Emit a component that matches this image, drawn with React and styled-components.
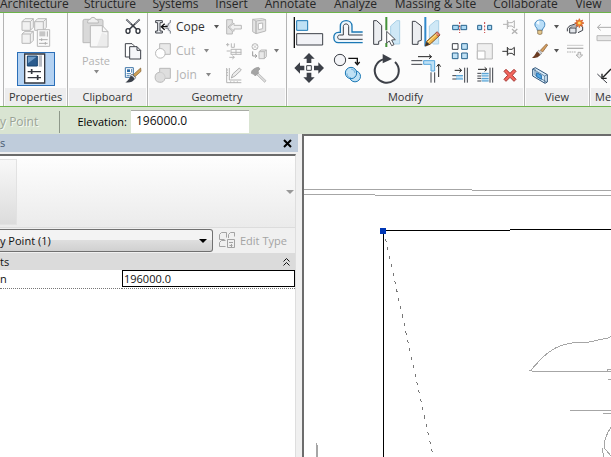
import React, { useState } from "react";
import styled, { createGlobalStyle } from "styled-components";

const GlobalStyle = createGlobalStyle`
  * { box-sizing: border-box; }
  body { margin: 0; background: #fff; }
  button, input, select { font: inherit; color: inherit; margin: 0; padding: 0; border: 0; background: none; border-radius: 0; }
`;

const ink = "#3d4048";
const pale = "#b9b9b9";
const blue = "#1b78b5";
const sky = "#bfe1f5";

const Page = styled.div`
  display: flex;
  flex-direction: column;
  min-height: 100vh;
  overflow: hidden;
  font: 12px/16px "Open Sans", "Noto Sans", sans-serif;
  color: #111;
`;

/* ---------- Ribbon ---------- */
const TabBar = styled.nav`
  display: grid;
  grid-template-columns: 76px 68px 63px 49px 69px 61px 99px 81px 1fr;
  align-content: end;
  height: 13px;
  overflow: hidden;
  background: #999;
  border-bottom: 1px solid #6cb44a;
`;

const Tab = styled.button`
  display: flex;
  align-items: flex-start;
  justify-content: ${(p) => (p.$start ? "flex-start" : "center")};
  height: 16px;
  font-size: 12px;
  color: #262626;
  white-space: nowrap;
`;

const Ribbon = styled.div`
  display: grid;
  grid-template-columns: 64px 80px 139px 238px 65px 1fr;
  padding-left: 3px;
  height: 94px;
  background: #fcfcfc;
  border-bottom: 1px solid #6cb44a;
`;

const Panel = styled.section`
  display: flex;
  flex-direction: column;
  min-width: 0;
  overflow: hidden;
  border-left: 1px solid #b4b4b4;
`;

const PanelBody = styled.div`
  display: flex;
  flex: 1;
  padding: ${(p) => p.$pad || "2px 0 0"};
  flex-direction: ${(p) => (p.$column ? "column" : "row")};
  align-items: ${(p) => (p.$column ? "center" : "flex-start")};
  gap: ${(p) => p.$gap || "0"};
`;

const PanelTitle = styled.h2`
  margin: 0 1px;
  height: 18px;
  font-size: 11px;
  line-height: 18px;
  font-weight: 400;
  text-align: ${(p) => (p.$start ? "left" : "center")};
  padding-left: ${(p) => (p.$start ? "4px" : "0")};
  background: #ededee;
  color: #333;
`;

const IconGrid = styled.div`
  display: grid;
  grid-template-columns: repeat(${(p) => p.$cols}, ${(p) => p.$w}px);
  grid-auto-rows: ${(p) => p.$h}px;
  margin-left: ${(p) => p.$left || 0}px;
`;

const Tool = styled.button`
  display: flex;
  align-items: center;
  font-size: 12px;
  white-space: nowrap;
  color: ${(p) => (p.disabled ? "#b3b3b3" : "#333")};
`;

const ActiveTool = styled.button`
  display: flex;
  width: 38px;
  height: 34px;
  border: 1px solid #2b6fb8;
  background: #b4d2f2;
`;

const PasteTool = styled.button`
  display: flex;
  flex-direction: column;
  align-items: center;
  width: 34px;
  font-size: 11px;
  line-height: 18px;
  color: #b3b3b3;
`;

const ToolList = styled.div`
  display: grid;
  grid-auto-rows: 24px;
  width: 67px;
`;

const ToolText = styled.span`
  margin: 0 8px 0 4px;
`;

const Svg = styled.svg`
  display: block;
  flex: none;
`;

/* Artwork is drawn on a grid of three units per pixel. */
function Art({ box, children }) {
  const [, , w, h] = box;
  return (
    <Svg viewBox={box.join(" ")} width={w / 3} height={h / 3} fill="none" strokeWidth="3" aria-hidden="true">
      {children}
    </Svg>
  );
}

const Arrow = ({ color = "#555" }) => (
  <Svg width="7" height="4" viewBox="0 0 7 4" aria-hidden="true">
    <path d="M1 0h5L3.500 3.500z" fill={color} />
  </Svg>
);

const WideArrow = ({ color }) => (
  <Svg width="8" height="4" viewBox="0 0 8 4" aria-hidden="true">
    <path d="M0 0h8L4 4z" fill={color} />
  </Svg>
);

const TypePropertiesArt = () => (
  <Art box={[60, 48, 96, 96]}>
    <g fill="#f1f1f1" stroke="#b9b9b9" strokeLinejoin="round">
      <path d="M66 65l9-9h25v26l-9 9H66zM66 65h25v26M91 65l9-9" />
      <path d="M104 65l9-9h26v26l-9 9h-26zM104 65h26v26M130 65l9-9" />
      <path d="M66 102l9-8h25v27l-9 9H66zM66 102h25v28M91 102l9-8" />
      <path d="M112 89h37v50h-37z" fill="#fafafa" />
    </g>
    <path d="M118 94h18v15h-18z" fill="#c6c6c6" />
    <path d="M142 94v16M117 119h26M117 130h26M125 115v8M136 126v8" stroke="#adadad" />
  </Art>
);

const PropertiesArt = () => (
  <Art box={[54, 159, 108, 96]}>
    <path d="M74 162h60v87H74z" fill="#fff" stroke="#343840" strokeWidth="4" />
    <path d="M82 168h30v30H82z" fill="#2b5c8e" stroke="#17436f" />
    <path d="M84 170h26L84 190z" fill="#6f9cc7" />
    <path d="M116 166h10v34h-10z" fill="#b8bcc4" />
    <path d="M83 215h40M83 233h40" stroke="#343840" strokeWidth="4" />
    <path d="M95 207v15M113 225v15" stroke="#343840" strokeWidth="5" />
  </Art>
);

const PasteArt = () => (
  <Art box={[237, 48, 102, 111]}>
    <path d="M249 66q0-5 5-5h50q5 0 5 5v65h-60z" fill="#d9d9d9" stroke={pale} />
    <path d="M263 67q0-6 8-6 1-6 8-6t8 6q8 0 8 6v5h-32z" fill="#efefef" stroke={pale} />
    <path d="M271 80h36l17 18v46h-53z" fill="#f8f8f8" stroke={pale} />
    <path d="M307 80v18h17" stroke={pale} />
    <path d="M306 100l15 8v33h-30z" fill="#ececec" />
  </Art>
);

const CutClipArt = () => (
  <Art box={[363, 45, 72, 72]}>
    <path d="M379 58l33 32M419 58l-33 32" stroke="#3c4048" strokeWidth="5" />
    <path d="M379 58l14 13M419 58l-14 13" stroke="#d6dbe4" strokeWidth="2" />
    <ellipse cx="384" cy="93" rx="6" ry="7" fill="#fff" stroke="#2c3038" strokeWidth="4" />
    <ellipse cx="414" cy="93" rx="6" ry="7" fill="#fff" stroke="#2c3038" strokeWidth="4" />
  </Art>
);

const CopyClipArt = () => (
  <Art box={[363, 117, 72, 72]}>
    <path d="M376 131h20l6 6v34h-26z" fill="#fff" stroke={ink} />
    <path d="M389 140h22l11 11v26h-33z" fill="#f5f6f9" stroke={ink} />
    <path d="M411 140v11h11" stroke={ink} />
  </Art>
);

const MatchArt = () => (
  <Art box={[363, 189, 72, 72]}>
    <path d="M376 203h24v29h-24z" fill="#fff" stroke="#3e75a8" />
    <path d="M381 208h9v8h-9z" fill="#2f6ba6" />
    <path d="M380 221h13M380 227h9M395 207v11" stroke="#4d83b3" />
    <path d="M400 224l22-20 1 10-18 16z" fill="#d2a256" stroke="#7b5a2d" strokeWidth="2" />
    <path d="M396 222l11 11-4 5-12-10z" fill="#d5d9df" stroke="#4d5158" strokeWidth="2" />
    <path d="M392 228q10 1 11 10-7 12-27 9 9-4 16-19z" fill="#3b414b" />
  </Art>
);

const CopeArt = () => (
  <Art box={[12, 45, 54, 72]}>
    <path d="M17 62h20v6h-7v25h7v6H17v-6h6V68h-6z" fill="#eef0f4" stroke={ink} />
    <path d="M61 62l-9 9v20l9 9z" fill="#e3e5e9" />
    <path d="M61 60v8l-6 3v5h-9M61 101v-8l-6-3v-5h-9" stroke="#7e838c" />
    <path d="M36 80h17M44 71l-10 9 10 9" stroke="#111" strokeWidth="4" />
  </Art>
);

const CutArt = () => (
  <Art box={[12, 117, 54, 72]}>
    <path d="M29 131h32v32H29z" fill="#e9e9e9" stroke={pale} />
    <circle cx="31" cy="160" r="14.500" fill="#fff" stroke={pale} />
  </Art>
);

const JoinArt = () => (
  <Art box={[12, 189, 54, 72]}>
    <path d="M29 205h32v30H45a15 15 0 1 1-16-18z" fill="#dedede" stroke={pale} />
    <path d="M29 217a15 15 0 0 1 16 18" stroke="#cfcfcf" />
  </Art>
);

const ApplyArt = () => (
  <Art box={[213, 45, 78, 72]}>
    <path d="M230 59h17v11l-13 11 13 12v9h-17z" fill="#e2e2e2" stroke={pale} />
    <path d="M238 81l14-12v7h22v11h-22v7z" fill="#f1f1f1" stroke={pale} />
  </Art>
);

const WallOpenArt = () => (
  <Art box={[291, 45, 78, 72]}>
    <path d="M308 58l10 5v38l-10-6zM318 63l29-4v34l-29 8z" fill="#e5e5e5" stroke={pale} />
    <path d="M325 71l13-2v17l-13 3z" fill="#fff" stroke={pale} />
    <path d="M308 58l29-2 10 3" stroke={pale} />
  </Art>
);

const BeamArt = () => (
  <Art box={[213, 117, 78, 72]}>
    <path d="M228 134h10M233 129v10M244 130v12M253 130v12M244 142h9M243 148h31M243 157h31M243 163h31M243 148v16M258 148v16M273 148v16" stroke="#b8b8b8" />
    <path d="M230 153h10M238 172h15M247 167l6 5-6 5" stroke="#b8b8b8" />
  </Art>
);

const FaceArt = () => (
  <Art box={[291, 117, 78, 72]}>
    <circle cx="315" cy="140" r="9" stroke={pale} />
    <path d="M309 134l12 12M321 134l-12 12" stroke={pale} strokeWidth="2" />
    <path d="M308 154v14h11M315 163l6 5-6 5" stroke="#999" />
    <path d="M327 155l6-5h16v20l-6 6h-16zM327 155h16v21M343 155l6-5" fill="#e9e9e9" stroke={pale} />
  </Art>
);

const WallJoinArt = () => (
  <Art box={[213, 189, 78, 72]}>
    <path d="M230 204v44h44M238 204v36h36M234 210h-4M234 218h-4M234 226h-4M242 244v4M252 244v4M262 244v4" stroke="#b4b4b4" />
    <path d="M244 234l4-12 20-18 6 6-19 18z" fill="#ececec" stroke="#b0b0b0" />
  </Art>
);

const HammerArt = () => (
  <Art box={[291, 189, 78, 72]}>
    <path d="M324 219l24 23-4 5-24-23z" fill="#dcdcdc" stroke="#a8a8a8" strokeWidth="2" />
    <path d="M304 220q0-9 6-12 8-6 16-6l4 5-6 6 2 5-10 10-5-5z" fill="#a4a4a4" stroke="#959595" strokeWidth="2" />
  </Art>
);

const AlignArt = () => (
  <Art box={[3, 45, 117, 108]}>
    <path d="M19 51v93" stroke="#111" strokeWidth="4" />
    <path d="M26 62h33v29H26z" fill={sky} stroke={blue} />
    <path d="M26 101h78v34H26z" fill="#f1f2f6" stroke={ink} />
  </Art>
);

const OffsetArt = () => (
  <Art box={[120, 45, 117, 108]}>
    <path d="M224 128h-73c-18 0-18-31 0-31h6V79c0-23 35-23 35 0v17h32" fill="#edf6fc" stroke={blue} strokeWidth="4" />
    <path d="M224 118h-69c-8 0-8-13 0-13h11V80c0-11 16-11 16 0v25h42" fill="#f6f7fa" stroke={ink} />
  </Art>
);

const MirrorPickArt = () => (
  <Art box={[237, 45, 117, 108]}>
    <path d="M257 62h9l15 14v45l-9 3v9h-15z" fill="#eceef1" stroke={ink} />
    <path d="M335 62h-9l-18 16v45l12 9h15z" fill="#cfe8f6" stroke="#a9d0e6" />
    <path d="M295 51v40M295 129v12" stroke="#45923a" strokeWidth="6" />
    <path d="M296 94v35l8-6 7 14 7-3-7-14 11-1z" fill="#fff" stroke="#505258" />
  </Art>
);

const MirrorDrawArt = () => (
  <Art box={[354, 45, 117, 108]}>
    <path d="M373 64h9l18 14v43l-10 3v9h-17z" fill="#eceef1" stroke={ink} />
    <path d="M452 62h-9l-19 16v43l12 11h16z" fill="#cfe8f6" stroke="#a9d0e6" />
    <path d="M412 51v88" stroke="#3188cb" strokeWidth="6" />
    <path d="M412 138l4-14 31-28 9 9-30 28z" fill="#f0b548" stroke="#805223" />
    <path d="M442 100l6-5 8 9-6 5z" fill="#e68375" stroke="#934d40" strokeWidth="2" />
    <path d="M412 138l4-13 9 8z" fill="#333" />
    <path d="M420 126l26-24" stroke="#fff0a6" />
  </Art>
);

const MoveArt = () => (
  <Art box={[3, 153, 117, 108]}>
    <path d="M63 159l17 17H70v13H56v-13H46zM63 249l17-17H70v-14H56v14H46zM19 204l17-17v10h13v14H36v10zM108 204l-17-17v10H78v14h13v10z" fill="#3c4048" />
    <path d="M56 197h14v14H56z" fill="#fff" stroke={ink} />
  </Art>
);

const CopyArt = () => (
  <Art box={[120, 153, 117, 108]}>
    <circle cx="156" cy="180" r="17" fill="#f3f4f7" stroke={ink} />
    <path d="M181 175h27v15M201 186l7 8 7-8" stroke="#111" strokeWidth="4" />
    <circle cx="201" cy="229" r="16.500" fill={sky} stroke={blue} />
    <circle cx="189" cy="219" r="17" fill={sky} stroke={blue} />
    <path d="M177 220a13 13 0 0 0 12 13M189 207a13 13 0 0 1 12 12" stroke="#74b3dc" />
  </Art>
);

const RotateArt = () => (
  <Art box={[237, 153, 117, 108]}>
    <path d="M321 186a36 36 0 1 1-36-8" stroke={ink} strokeWidth="6" />
    <path d="M284 162l28 15-28 13z" fill={ink} />
  </Art>
);

const TrimArt = () => (
  <Art box={[354, 153, 117, 108]}>
    <path d="M407 182h33v31h-11v-20h-22z" fill={sky} stroke="#55a5dc" />
    <path d="M370 182h33M370 193h33M429 217v31M440 217v31" stroke={ink} />
    <path d="M390 170h39M423 164l8 6-8 6M452 231v-37M446 200l6-8 6 8" stroke="#222" />
  </Art>
);

const SplitArt = () => (
  <Art box={[21, 45, 75, 72]}>
    <path d="M38 76h17v13H38zM63 76h17v13H63z" fill="#abdaf5" stroke="#28638d" />
    <path d="M59 66v33" stroke="#c33d3d" strokeDasharray="6 4" />
  </Art>
);

const SplitGapArt = () => (
  <Art box={[96, 45, 75, 72]}>
    <path d="M113 76h12v13h-12zM143 76h12v13h-12z" fill="#abdaf5" stroke="#28638d" />
    <path d="M134 66v33" stroke="#c33d3d" strokeDasharray="6 4" />
  </Art>
);

const UnpinArt = () => (
  <Art box={[171, 45, 75, 72]}>
    <path d="M189 73h13M202 60v27M204 66l4 2h8l7-6v22l-7-6h-8l-4 2z" stroke="#b2b2b2" />
    <path d="M216 87l16 14M232 87l-16 14" stroke="#b2b2b2" strokeWidth="4" />
  </Art>
);

const ArrayArt = () => (
  <Art box={[21, 117, 75, 72]}>
    <path d="M37 131h17v17H37z" fill="#fff" stroke={ink} />
    <path d="M65 131h17v17H65zM37 159h17v17H37zM65 159h17v17H65z" fill={sky} stroke="#28638d" />
  </Art>
);

const ScaleArt = () => (
  <Art box={[96, 117, 75, 72]}>
    <path d="M112 131h45v46h-45z" fill="#efefef" stroke={pale} />
    <path d="M112 153h23v24h-23z" fill="#fff" stroke={pale} />
  </Art>
);

const PinArt = () => (
  <Art box={[171, 117, 75, 72]}>
    <path d="M187 154h15M202 141v26" stroke="#333" />
    <path d="M203 145l5 3h8l7-6v24l-7-6h-8l-5 3z" fill="#fff" stroke="#333" />
  </Art>
);

const TrimSingleArt = () => (
  <Art box={[21, 189, 75, 72]}>
    <path d="M48 227h20v10H48z" fill={sky} />
    <path d="M37 227h12M37 237h12" stroke={ink} />
    <path d="M48 227h21M48 237h21" stroke="#4397cf" />
    <path d="M74 203v45M82 203v45" stroke={ink} />
    <path d="M44 211h19M58 205l7 6-7 6" stroke="#222" />
  </Art>
);

const TrimMultiArt = () => (
  <Art box={[96, 189, 75, 72]}>
    <path d="M124 220h22v8h-22zM124 235h22v8h-22z" fill={sky} />
    <path d="M112 220h12M112 228h12M112 235h12M112 243h12" stroke={ink} />
    <path d="M126 220h20M126 228h20M126 235h20M126 243h20" stroke="#4397cf" />
    <path d="M150 203v45M158 203v45" stroke={ink} />
    <path d="M114 208h25M134 202l7 6-7 6" stroke="#222" />
  </Art>
);

const DeleteArt = () => (
  <Art box={[171, 189, 75, 72]}>
    <path d="M192 214l6-6 12 12 12-12 6 6-11 12 11 12-6 6-12-12-12 12-6-6 11-12z" fill="#f4655c" stroke="#a3342f" />
  </Art>
);

const BulbArt = () => (
  <Art box={[261, 45, 78, 72]}>
    <path d="M292 91q0-7-6-12c-9-22 33-28 28-2-1 6-7 8-7 14z" fill="#b9def8" stroke="#4388c0" />
    <path d="M289 70q1-8 9-9v14z" fill="#f2faff" />
    <path d="M293 91h13v10q-6 5-13 0z" fill="#e5c78b" stroke="#786445" strokeWidth="2" />
  </Art>
);

const BrushArt = () => (
  <Art box={[261, 117, 78, 72]}>
    <path d="M301 151l18-19 4 3-15 21z" fill="#d6a05f" stroke="#79502e" strokeWidth="2" />
    <path d="M296 151l9 8-5 7-10-9z" fill="#d9dce1" stroke="#6b6b6b" strokeWidth="2" />
    <path d="M290 156q9 1 10 10-7 10-24 7 7-4 14-17z" fill="#6b3c22" />
  </Art>
);

const SectionBoxArt = () => (
  <Art box={[261, 189, 78, 72]}>
    <path d="M278 207l8-4 36 21v22l-7 4-37-22z" fill="#d5eaf8" stroke="#33587c" strokeLinejoin="round" />
    <path d="M278 207l36 21v21M314 228l8-4M285 206v19l35 21" stroke="#33587c" strokeWidth="2" />
    <path d="M290 218l14 8v12l-14-8z" fill="#52a7e4" stroke="#1e6bad" />
  </Art>
);

const DisplaceArt = () => (
  <Art box={[366, 45, 78, 72]}>
    <path d="M382 94v-8q4-9 12-10l14-5h8l12 10v10l-14 7" fill="#f1f2f4" stroke={ink} />
    <path d="M389 84h19v15h-19z" fill="#e2e5ea" stroke={ink} />
    <path d="M391 84l6-6h16l-5 6" stroke={ink} strokeWidth="2" />
    <path d="M418 56l3 7 7-3-3 7 7 2-7 3 3 7-7-3-3 7-3-7-7 3 3-7-7-3 7-2-3-7 7 3z" fill="#f08a2c" stroke="#cf4a1a" strokeWidth="2" />
    <circle cx="418" cy="69" r="4" fill="#ffe275" />
  </Art>
);

const LineworkArt = () => (
  <Art box={[366, 117, 78, 72]}>
    <path d="M381 136h49" stroke="#b0b0b0" strokeWidth="2" />
    <path d="M381 145h49" stroke="#b0b0b0" strokeWidth="4" />
    <path d="M381 156h26" stroke="#b0b0b0" strokeDasharray="5 2" />
    <path d="M414 157h8v8h6l-10 9-10-9h6z" fill="#ececec" stroke="#b0b0b0" />
  </Art>
);

const MeasureArt = () => (
  <Art box={[465, 45, 63, 72]}>
    <path d="M474 82h54M482 73l-10 9 10 9" stroke="#aaa" />
    <path d="M471 107h57v15h-57z" fill="#e8e8e8" stroke={pale} />
  </Art>
);

const RulerArt = () => (
  <Art box={[465, 117, 63, 72]}>
    <path d="M471 107h57v15h-57z" fill="#e8e8e8" stroke={pale} />
  </Art>
);

const DimensionArt = () => (
  <Art box={[465, 189, 63, 72]}>
    <path d="M472 222l29 27" stroke={ink} />
    <path d="M513 207l-24 25M486 221v14h14" stroke="#222" strokeWidth="4" />
  </Art>
);

const IconTool = ({ label, disabled, children }) => (
  <Tool aria-label={label} disabled={disabled}>{children}</Tool>
);

/* ---------- Options bar ---------- */
const OptionsBar = styled.div`
  display: flex;
  align-items: center;
  height: 27px;
  padding-top: 2px;
  background: #d9e4d2;
`;

const OptionName = styled.span`
  width: 60px;
  padding-right: 22px;
  height: 22px;
  line-height: 21px;
  text-align: right;
  font-size: 12px;
  white-space: nowrap;
  color: #9aa396;
  text-shadow: 1px 1px 0 #f5faf2;
  border-right: 1px solid #8e988a;
`;

const OptionLabel = styled.label`
  width: 71px;
  padding-right: 4px;
  text-align: right;
  font-size: 11px;
  color: #000;
`;

const OptionInput = styled.input`
  width: 118px;
  height: 23px;
  padding: 0 5px 3px;
  background: #fff;
  border-top: 1px solid #a8aba5;
`;

/* ---------- Palette and view ---------- */
const Workspace = styled.main`
  display: grid;
  grid-template-columns: 298px minmax(0, 1fr);
  column-gap: 4px;
  flex: 1;
  background: #f0f0f0;
`;

const Palette = styled.aside`
  display: flex;
  flex-direction: column;
  font-size: 11px;
`;

const PaletteHeader = styled.header`
  display: flex;
  align-items: center;
  justify-content: space-between;
  height: 18px;
  padding-right: 6px;
  background: #bfccdb;
  color: #475a70;
`;

const CloseButton = styled.button`
  display: flex;
  color: #000;
`;

const PaletteBody = styled.div`
  display: flex;
  flex-direction: column;
  flex: 1;
  margin: 2px 2px 0 0;
  border-top: 2px solid #6b6b6b;
  border-right: 1px solid #dedede;
`;

const Preview = styled.div`
  display: flex;
  align-items: center;
  justify-content: space-between;
  height: 72px;
  padding-right: 1px;
  background: linear-gradient(#fefefe, #ebebeb);
  border-bottom: 1px solid #dcdcdc;
`;

const Thumb = styled.div`
  width: 17px;
  height: 66px;
  background: linear-gradient(#f8f8f8, #dcdcdc);
  border: 1px solid #e2e2e2;
  border-left: 0;
`;

const TypeRow = styled.div`
  display: flex;
  align-items: center;
  height: 25px;
  gap: 6px;
`;

const SelectWrap = styled.div`
  display: flex;
  align-items: center;
  width: 213px;
  height: 23px;
  padding-right: 5px;
  border: 1px solid #707070;
  border-left: 0;
  border-radius: 0 3px 3px 0;
  background: linear-gradient(#f3f3f3 0 48%, #dedede 50%, #d0d0d0);
`;

const Select = styled.select`
  flex: 1;
  appearance: none;
  height: 21px;
`;

const EditType = styled.button`
  display: flex;
  align-items: center;
  gap: 4px;
  color: #a3a3a3;
  white-space: nowrap;
`;

const Category = styled.button`
  display: flex;
  align-items: center;
  justify-content: space-between;
  height: 17px;
  padding-right: 5px;
  background: #dbdbdb;
`;

const PropertyTable = styled.table`
  width: 100%;
  table-layout: fixed;
  border-collapse: collapse;
  background: #fff;
`;

const PropertyName = styled.th`
  width: 122px;
  height: 18px;
  padding: 0;
  font-weight: 400;
  text-align: left;
  border-bottom: 1px dotted #777;
`;

const PropertyValue = styled.td`
  padding: 0;
  border-bottom: 1px dotted #777;
`;

const PropertyInput = styled.input`
  display: block;
  width: 100%;
  height: 17px;
  padding: 0 1px 1px;
  border: 1px solid #000;
  background: #fff;
`;

const Blank = styled.div`
  flex: 1;
  background: #fff;
`;

const Viewport = styled.div`
  display: flex;
  background: #fff;
  border-top: 2px solid #6c6c6c;
  border-left: 2px solid #6c6c6c;
`;

const Drawing = styled.svg`
  flex: 1;
  min-width: 0;
  overflow: hidden;
`;

const tabs = ["Architecture", "Structure", "Systems", "Insert", "Annotate", "Analyze", "Massing & Site", "Collaborate", "View"];

const bigTools = [
  ["Align", AlignArt], ["Offset", OffsetArt], ["Mirror by axis", MirrorPickArt], ["Mirror by line", MirrorDrawArt],
  ["Move", MoveArt], ["Copy", CopyArt], ["Rotate", RotateArt], ["Trim to corner", TrimArt],
];

const smallTools = [
  ["Split", SplitArt], ["Split with gap", SplitGapArt], ["Unpin", UnpinArt, true],
  ["Array", ArrayArt], ["Scale", ScaleArt, true], ["Pin", PinArt],
  ["Trim single", TrimSingleArt], ["Trim multiple", TrimMultiArt], ["Delete", DeleteArt],
];

const geometryTools = [["Cope", CopeArt, false], ["Cut", CutArt, true], ["Join", JoinArt, true]];

const renderTool = ([label, Icon, disabled]) => (
  <IconTool key={label} label={label} disabled={disabled}><Icon /></IconTool>
);

export default function App() {
  const [elevation, setElevation] = useState("196000.0");
  const change = (e) => setElevation(e.target.value);

  return (
    <Page>
      <GlobalStyle />
      <TabBar>
        {tabs.map((t, i) => <Tab key={t} $start={i === 0}>{t}</Tab>)}
      </TabBar>
      <Ribbon>
        <Panel>
          <PanelBody $column $pad="3px 0 0" $gap="4px">
            <IconTool label="Type properties" disabled><TypePropertiesArt /></IconTool>
            <ActiveTool aria-label="Properties" aria-pressed="true"><PropertiesArt /></ActiveTool>
          </PanelBody>
          <PanelTitle>Properties</PanelTitle>
        </Panel>
        <Panel>
          <PanelBody $pad="2px 0 0 11px">
            <PasteTool disabled><PasteArt />Paste<Arrow color="#888" /></PasteTool>
            <IconGrid $cols={1} $w={24} $h={24} $left={8}>
              {[["Cut to clipboard", CutClipArt], ["Copy to clipboard", CopyClipArt], ["Match type", MatchArt]].map(renderTool)}
            </IconGrid>
          </PanelBody>
          <PanelTitle>Clipboard</PanelTitle>
        </Panel>
        <Panel>
          <PanelBody $pad="2px 0 0 6px">
            <ToolList>
              {geometryTools.map(([name, Icon, off]) => (
                <Tool key={name} disabled={off}><Icon /><ToolText>{name}</ToolText><Arrow color={off ? "#888" : "#555"} /></Tool>
              ))}
            </ToolList>
            <IconGrid $cols={1} $w={26} $h={24}>
              {[["Apply coping", ApplyArt, true], ["Beam joins", BeamArt, true], ["Wall joins", WallJoinArt, true]].map(renderTool)}
            </IconGrid>
            <IconGrid $cols={1} $w={33} $h={24}>
              <IconTool label="Wall opening" disabled><WallOpenArt /></IconTool>
              <IconTool label="Split face" disabled><FaceArt /><Arrow color="#777" /></IconTool>
              <IconTool label="Demolish" disabled><HammerArt /></IconTool>
            </IconGrid>
          </PanelBody>
          <PanelTitle>Geometry</PanelTitle>
        </Panel>
        <Panel>
          <PanelBody $pad="2px 0 0 2px">
            <IconGrid $cols={4} $w={39} $h={36}>{bigTools.map(renderTool)}</IconGrid>
            <IconGrid $cols={3} $w={25} $h={24} $left={2}>{smallTools.map(renderTool)}</IconGrid>
          </PanelBody>
          <PanelTitle>Modify</PanelTitle>
        </Panel>
        <Panel>
          <PanelBody $pad="2px 0 0 2px">
            <IconGrid $cols={1} $w={35} $h={24}>
              <IconTool label="Hide in view"><BulbArt /><Arrow /></IconTool>
              <IconTool label="Override graphics"><BrushArt /><Arrow /></IconTool>
              <IconTool label="Selection box"><SectionBoxArt /></IconTool>
            </IconGrid>
            <IconGrid $cols={1} $w={26} $h={24}>
              {[["Displace elements", DisplaceArt], ["Linework", LineworkArt, true]].map(renderTool)}
            </IconGrid>
          </PanelBody>
          <PanelTitle>View</PanelTitle>
        </Panel>
        <Panel>
          <PanelBody $pad="2px 0 0 5px">
            <IconGrid $cols={1} $w={21} $h={24}>
              {[["Measure", MeasureArt, true], ["Ruler", RulerArt, true], ["Dimension", DimensionArt]].map(renderTool)}
            </IconGrid>
          </PanelBody>
          <PanelTitle $start>Me</PanelTitle>
        </Panel>
      </Ribbon>

      <OptionsBar>
        <OptionName>y Point</OptionName>
        <OptionLabel htmlFor="elevation">Elevation:</OptionLabel>
        <OptionInput id="elevation" value={elevation} onChange={change} />
      </OptionsBar>

      <Workspace>
        <Palette>
          <PaletteHeader>
            <span>s</span>
            <CloseButton aria-label="Close">
              <Svg width="9" height="9" viewBox="0 0 9 9" stroke="#000" strokeWidth="2" aria-hidden="true">
                <path d="M1 1l7 7M8 1L1 8" />
              </Svg>
            </CloseButton>
          </PaletteHeader>
          <PaletteBody>
            <Preview><Thumb /><WideArrow color="#999" /></Preview>
            <TypeRow>
              <SelectWrap>
                <Select aria-label="Selected element"><option>y Point (1)</option></Select>
                <WideArrow color="#000" />
              </SelectWrap>
              <EditType disabled>
                <Svg width="17" height="17" viewBox="0 0 17 17" fill="none" stroke="#a3a3a3" aria-hidden="true">
                  <path d="M.5 2.500l2-2h5v5M.5 2.500v5h5M9.500 6V2.500l2-2h4v4M.5 10.500l2-2h4M.5 10.500v4h6M8.500 7.500h7v8h-7zM10 10.500h4M10.500 13.500h3M12.500 12v3" />
                </Svg>
                Edit Type
              </EditType>
            </TypeRow>
            <Category>
              <span>ts</span>
              <Svg width="7" height="8" viewBox="0 0 7 8" fill="none" stroke="#111" aria-hidden="true">
                <path d="M.5 3.500l3-3 3 3M.5 7.500l3-3 3 3" />
              </Svg>
            </Category>
            <PropertyTable>
              <tbody>
                <tr>
                  <PropertyName scope="row"><label htmlFor="property">n</label></PropertyName>
                  <PropertyValue><PropertyInput id="property" value={elevation} onChange={change} /></PropertyValue>
                </tr>
              </tbody>
            </PropertyTable>
            <Blank />
          </PaletteBody>
        </Palette>
        <Viewport>
          <Drawing width="100%" height="100%" fill="none" stroke="#a6a6a6" shapeRendering="crispEdges" role="img" aria-label="Site plan view">
            <path d="M0 53.500h168M168 54.500h3000M0 58.500h71M71 59.500h3000" />
            <path d="M79.500 94v3000M79 94.500h127M206 93.500h3000" stroke="#000" />
            <path d="M81.500 103l48 219" stroke="#777" strokeDasharray="3.200 5.400" />
            <path d="M76 92h6v6h-6z" fill="#0037b5" stroke="none" />
            <path d="M12.500 307v3000M13.500 309v3000" />
            <path d="M226 235L238 222Q251 209 268 207L285 206L304 202L311 199M225 234.500h3M228 235.500h3000M303.500 235v-2h2000M304 243.500h3000M266 274.500h3000M299 277.500h3000" />
            <path d="M308 290Q298 304 301 313L308 321M298.500 312q0 7 3 12" />
          </Drawing>
        </Viewport>
      </Workspace>
    </Page>
  );
}
